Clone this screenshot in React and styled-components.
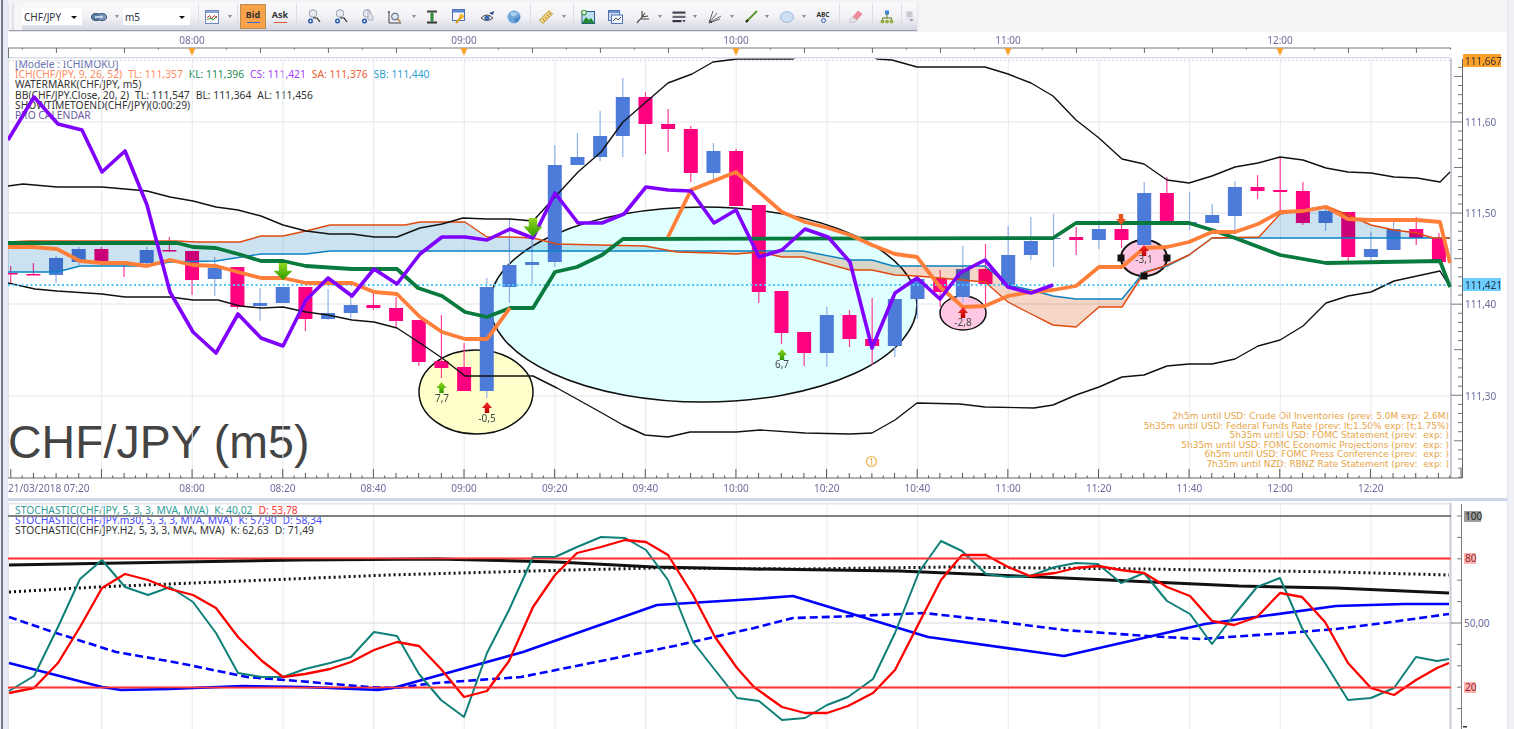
import React from "react";
import styled, { createGlobalStyle } from "styled-components";

const GlobalStyle = createGlobalStyle`
  html, body { margin: 0; padding: 0; background: #fff; overflow: hidden; }
  body { font-family: "Noto Sans", "Liberation Sans", sans-serif; }
`;

// candles: colour, body top, body bottom, wick top, wick bottom
const CANDLES = [
  ["p", 273, 274.5, 266, 283], ["p", 274, 275.5, 263, 275], ["b", 258, 275, 256, 283], ["b", 249, 262, 247, 265],
  ["p", 249, 262, 247, 262], ["p", 262, 263, 262, 277], ["b", 250, 263, 247, 267], ["p", 250, 251.5, 237, 252],
  ["p", 251, 280, 251, 295], ["b", 268, 279, 257, 296], ["p", 267, 307, 267, 309], ["b", 303, 306, 288, 321],
  ["b", 287, 303, 287, 303], ["p", 287, 319, 287, 331], ["b", 313, 319, 289, 320], ["b", 305, 313, 297, 318],
  ["p", 305, 308, 293, 310], ["p", 308, 321, 297, 328], ["p", 320, 362, 320, 366], ["p", 361, 368, 315, 378],
  ["p", 367, 391, 343, 391], ["b", 287, 391, 278, 398], ["b", 265, 287, 218, 303], ["b", 262, 265, 230, 284],
  ["b", 165, 262, 145, 267], ["b", 157, 165, 133, 165], ["b", 136, 157, 111, 161], ["b", 97, 136, 78, 157],
  ["p", 97, 124, 92, 154], ["p", 124, 129, 109, 152], ["p", 129, 173, 126, 182], ["b", 151, 173, 143, 180],
  ["p", 151, 206, 149, 206], ["p", 205, 292, 205, 303], ["p", 291, 333, 291, 344], ["p", 332, 353, 332, 366],
  ["b", 315, 353, 307, 367], ["p", 315, 339, 310, 347], ["p", 339, 346, 298, 365], ["b", 299, 346, 299, 357],
  ["b", 279, 299, 279, 319], ["p", 278, 292, 270, 307], ["b", 269, 297, 246, 302], ["p", 269, 284, 244, 305],
  ["b", 255, 285, 226, 287], ["b", 241, 255, 217, 260], ["b", 238, 239, 214, 267], ["p", 237, 240, 227, 255],
  ["b", 229, 240, 220, 249], ["p", 229, 240, 223, 248], ["b", 193, 245, 182, 245], ["p", 193, 222, 177, 222],
  ["b", 222, 224, 192, 230], ["b", 215, 223, 204, 223], ["b", 187, 216, 181, 230], ["p", 187, 191, 175, 199],
  ["p", 190, 192, 158, 210], ["p", 191, 223, 182, 225], ["b", 211, 223, 208, 231], ["p", 212, 257, 212, 261],
  ["b", 249, 257, 232, 262], ["b", 229, 250, 220, 250], ["p", 229, 238, 217, 245], ["p", 238, 262, 233, 262],
];
const candleX = (i) => 10.7 + i * 22.67;

const CLOUD_TOP = "8,242 28,241 177,241 197,242 240,242 261,236 283,236 306,231 330,225 405,225 420,222 465,222 487,237 510,237 533,238 557,244 600,245 645,246 677,252 713,253 736,254 759,252 782,257 803,257 850,270 872,270 895,275 917,276 985,282 1008,302 1031,314 1053,325 1076,327 1099,307 1122,307 1144,273 1167,265 1189,255 1212,238 1259,237 1280,214 1303,210 1326,206 1348,215 1371,225 1394,230 1417,233 1433,238 1450,238";
const CLOUD_BOTTOM = "8,272 57,272 80,266 147,266 170,262 216,261 261,254 306,254 330,251 803,251 850,260 872,260 893,266 985,266 1008,285 1031,290 1053,296 1076,299 1122,299 1144,272 1167,266 1189,255 1212,238 1450,238";
const CLOUD_POLY = `${CLOUD_TOP} ${CLOUD_BOTTOM.split(" ").reverse().join(" ")}`;

const BB_UP = "8,186 23,184 57,187 102,187 125,189 147,191 170,197 193,201 216,207 238,210 261,216 283,225 306,231 330,234 352,234 374,237 397,237 420,228 442,224 463,218 487,219 510,219 533,221 555,197 578,172 601,152 623,122 646,102 668,83 692,74 713,62 737,59 793,59 805,50 865,50 877,59 892,60 917,67 985,67 1008,74 1031,83 1053,96 1076,120 1099,138 1122,159 1144,164 1167,180 1189,183 1212,176 1235,167 1258,163 1280,157 1303,160 1326,168 1348,172 1371,173 1394,177 1417,178 1440,182 1450,172";
const BB_LOW = "8,283 35,289 57,291 102,294 125,297 170,297 193,300 218,300 240,306 261,308 283,307 306,312 328,315 352,320 374,322 397,328 420,343 442,358 465,376 533,376 557,388 602,413 623,425 645,435 668,437 690,432 736,432 760,430 805,433 850,434 872,433 895,420 917,403 960,404 985,407 1034,408 1053,405 1076,395 1099,387 1122,377 1144,375 1167,366 1189,364 1212,364 1235,359 1258,346 1280,340 1303,326 1326,303 1348,296 1371,292 1394,281 1417,276 1440,271 1450,287";
const KIJUN = "8,243 177,243 193,247 216,248 238,254 261,261 283,261 306,266 352,269 397,269 418,288 442,296 465,312 487,317 510,308 533,308 555,272 577,267 602,255 623,239 1053,238 1076,223 1189,223 1212,230 1235,238 1280,255 1326,263 1440,261 1450,287";
const TENKAN_A = "8,247 33,247 57,249 80,261 102,263 125,263 147,266 170,260 193,265 216,266 238,272 261,278 283,278 306,283 352,283 374,292 397,294 420,317 442,332 465,339 487,339 510,308";
const TENKAN_B = "668,237 691,190 736,172 782,212 805,222 828,228 850,235 872,245 895,254 917,257 940,287 963,307 985,306 1008,296 1031,292 1053,290 1076,286 1099,267 1122,267 1144,248 1167,247 1189,242 1212,232 1235,232 1258,224 1280,212 1303,211 1326,207 1348,219 1371,220 1417,220 1440,222 1450,263";
const CHIKOU = "8,140 34,97 58,124 82,130 102,172 125,151 147,205 170,292 193,332 216,353 238,314 261,338 283,346 306,300 328,278 352,296 374,269 397,284 420,254 442,237 465,237 487,240 510,229 533,238 555,193 578,223 602,223 624,214 646,187 668,190 691,191 714,223 736,210 759,257 782,250 805,229 828,237 850,262 872,348 895,293 917,278 940,299 960,273 985,260 1008,287 1031,293 1053,285";

const STOCH_K = "9,691 34,676 58,627 80,579 102,560 125,587 148,595 170,587 193,602 216,633 238,673 262,677 283,677 305,669 330,663 351,657 374,632 397,636 419,674 441,700 464,717 487,653 509,610 533,557 555,557 577,547 601,537 625,538 646,550 668,580 693,642 715,670 737,698 759,701 782,720 805,718 827,705 848,697 873,679 895,633 919,572 941,541 962,551 986,574 1008,577 1030,576 1055,567 1076,563 1098,564 1121,583 1144,573 1167,601 1190,614 1212,644 1234,615 1257,587 1280,578 1302,628 1325,663 1348,700 1371,698 1394,688 1416,657 1437,661 1449,659";
const STOCH_D = "9,693 34,688 58,663 80,627 102,588 125,574 148,580 170,589 193,595 216,608 238,637 262,661 283,677 305,674 330,669 351,662 374,650 397,642 419,646 441,669 464,697 487,691 509,661 533,607 555,575 577,553 601,547 625,540 646,542 668,555 693,595 715,637 737,668 754,687 782,707 805,713 827,713 848,706 873,693 895,670 919,623 941,580 962,555 986,555 1008,567 1030,576 1055,573 1076,568 1098,566 1121,570 1144,573 1167,587 1190,596 1212,621 1234,625 1257,617 1280,593 1302,597 1325,622 1348,663 1371,688 1394,695 1416,680 1437,668 1449,663";
const M30_K = "9,663 48,673 102,687 121,690 170,689 242,686 305,687 378,690 393,688 523,652 657,605 754,599 793,596 928,637 1064,656 1205,624 1336,606 1404,604 1449,604";
const M30_D = "9,617 53,632 116,652 179,663 247,677 310,682 368,687 393,688 436,683 521,677 606,660 679,645 754,628 793,618 856,616 924,613 987,620 1064,630 1147,636 1200,639 1287,633 1336,629 1384,623 1449,614";
const H2_K = "9,565 121,563 300,560 436,559 557,562 654,567 754,569 899,571 1064,578 1239,586 1336,588 1449,593";
const H2_D = "9,592 97,587 242,581 388,575 533,571 654,568 802,569 948,567 1142,569 1336,572 1449,575";

const TIME_LABELS = ["08:00", "08:20", "08:40", "09:00", "09:20", "09:40", "10:00", "10:20", "10:40", "11:00", "11:20", "11:40", "12:00", "12:20"];
const NEWS = [
  "2h5m until USD: Crude Oil Inventories (prev: 5.0M exp: 2.6M)",
  "5h35m until USD: Federal Funds Rate (prev: lt;1.50% exp: [t;1.75%)",
  "5h35m until USD: FOMC Statement (prev:  exp: )",
  "5h35m until USD: FOMC Economic Projections (prev:  exp: )",
  "6h5m until USD: FOMC Press Conference (prev:  exp: )",
  "7h35m until NZD: RBNZ Rate Statement (prev:  exp: )",
];

const range = (n) => Array.from({ length: n }, (_, i) => i);
const GRID_X = range(15).map((k) => 101.6 + k * 90.67);

const Page = styled.div`
  display: flex;
  width: 1514px;
  height: 729px;
  overflow: hidden;
`;
const LeftStrip = styled.div`
  width: 8px;
  flex: none;
  background: linear-gradient(90deg, #f4f4f8 0 1px, #77778c 1px 3px, #e6e8f4 3px);
`;
const RightStrip = styled.div`
  width: 7px;
  flex: none;
  background: #eef0f6;
  border-left: 1px solid #dfe3ee;
  box-sizing: border-box;
`;
const Main = styled.div`
  width: 1499px;
  display: flex;
  flex-direction: column;
`;
const TopBar = styled.div`
  height: 32px;
  flex: none;
  background: #f4f4f7;
  padding: 3px 0 0 1px;
  box-sizing: border-box;
`;
const Toolbar = styled.div`
  display: flex;
  align-items: center;
  width: 908px;
  height: 27px;
  background: linear-gradient(180deg, #fbfbfd 0%, #f2f2f6 50%, #d6d8e3 100%);
  box-shadow: 0 1px 1px #9a9cae;
`;
const Grip = styled.div`
  width: 13px;
  height: 100%;
  flex: none;
  background: linear-gradient(90deg, #f4f4f7 0 3px, #e2e3ea 3px 5px, #f6f6f9 5px);
`;
const Select = styled.div`
  width: ${(p) => p.$w}px;
  height: 17px;
  flex: none;
  display: flex;
  align-items: center;
  justify-content: space-between;
  background: #fff;
  box-sizing: border-box;
  padding: 0 5px 0 2px;
  font-size: 10px;
  color: #2c3040;
  &::after {
    content: "";
    border-left: 3.5px solid transparent;
    border-right: 3.5px solid transparent;
    border-top: 3.5px solid #111;
    margin-top: 2px;
  }
`;
const Slot = styled.div`
  width: ${(p) => p.$w}px;
  flex: none;
  display: flex;
  justify-content: center;
  align-items: center;
`;
const Caret = styled.div`
  width: ${(p) => p.$w}px;
  flex: none;
  box-sizing: border-box;
  padding-left: ${(p) => p.$pl || 0}px;
  &::before {
    content: "";
    display: block;
    width: 0;
    border-left: 2.5px solid transparent;
    border-right: 2.5px solid transparent;
    border-top: 3px solid #8a8c98;
  }
`;
const Sep = styled.div`
  width: ${(p) => p.$w}px;
  height: 26px;
  flex: none;
  box-sizing: border-box;
  border-right: 1px solid #dcdde6;
`;
const QuoteButton = styled.div`
  width: 26px;
  height: 25px;
  flex: none;
  margin-left: ${(p) => p.$ml || 0}px;
  box-sizing: border-box;
  display: flex;
  flex-direction: column;
  align-items: center;
  justify-content: center;
  font-size: 9px;
  font-weight: 700;
  line-height: 10px;
  color: #333;
  background: ${(p) => (p.$active ? "#f9a24a" : "transparent")};
  border: 1px solid ${(p) => (p.$active ? "#b98c50" : "transparent")};
  &::after {
    content: "";
    width: 13px;
    height: 1.5px;
    margin-top: 2px;
    background: ${(p) => p.$line};
  }
`;

const PricePane = styled.div`
  position: relative;
  height: 466px;
  flex: none;
  background: #fff;
`;
const Splitter = styled.div`
  height: 3px;
  flex: none;
  background: #cbd6e8;
`;
const StochPane = styled.div`
  position: relative;
  height: 228px;
  flex: none;
  background: #fff;
`;
const ChartSvg = styled.svg`
  position: relative;
  z-index: 1;
  display: block;
  font-family: "Noto Sans", "Liberation Sans", sans-serif;
`;
const Legend = styled.div`
  position: absolute;
  left: 7px;
  top: ${(p) => p.$top}px;
  font-size: 10.3px;
  line-height: 10.2px;
  white-space: pre;
  color: #333;
`;
const LegendRow = styled.div`
  height: 10.2px;
  color: ${(p) => p.$color || "inherit"};
`;
const Tone = styled.span`
  color: ${(p) => p.$color};
  margin-left: 6px;
`;
const Watermark = styled.div`
  position: absolute;
  left: 0;
  top: 384px;
  font-family: "Liberation Sans", Arial, sans-serif;
  font-size: 46.5px;
  line-height: 52px;
  color: #444;
  white-space: pre;
`;
const NewsBox = styled.div`
  position: absolute;
  right: 58px;
  top: 380px;
  text-align: right;
  font-family: "DejaVu Sans", sans-serif;
  font-size: 9px;
  line-height: 9.6px;
  color: #e8a445;
  white-space: pre;
`;

const Line = ({ points, color, w = 1.5, dash }) => (
  <polyline points={points} fill="none" stroke={color} strokeWidth={w} strokeDasharray={dash} strokeLinejoin="round" />
);

const Arrow = ({ x, y, w, h, fill, down }) => {
  const head = h * 0.55;
  const stem = w * 0.22;
  const pts = down
    ? [[x - stem, y], [x + stem, y], [x + stem, y + h - head], [x + w / 2, y + h - head], [x, y + h], [x - w / 2, y + h - head], [x - stem, y + h - head], [x - stem, y]]
    : [[x, y], [x + w / 2, y + head], [x + stem, y + head], [x + stem, y + h], [x - stem, y + h], [x - stem, y + head], [x - w / 2, y + head]];
  return <polygon points={pts.map((p) => p.join(",")).join(" ")} fill={fill} />;
};

const AxisText = ({ x, y, children, color = "#6a6c9c", anchor = "middle" }) => (
  <text x={x} y={y} fontSize="10" fill={color} textAnchor={anchor}>{children}</text>
);

const Candles = () =>
  CANDLES.map(([c, top, bottom, wt, wb], i) => {
    const x = candleX(i);
    return (
      <g key={i}>
        <line x1={x} x2={x} y1={wt} y2={wb} stroke={c === "b" ? "#8fb0ea" : "#ff3c98"} strokeWidth="1.2" />
        <rect x={x - 7} y={top} width="14" height={bottom - top} fill={c === "b" ? "#4c7bd9" : "#ff0080"} />
      </g>
    );
  });

function PriceChart() {
  return (
    <ChartSvg width="1499" height="466" viewBox="8 32 1499 466">
      <defs>
        <clipPath id="plot"><rect x="8" y="58.5" width="1442.5" height="420" /></clipPath>
        <clipPath id="blueA"><rect x="8" y="58" width="660" height="420" /></clipPath>
        <clipPath id="brown"><rect x="668" y="58" width="544" height="420" /></clipPath>
        <clipPath id="blueB"><rect x="1212" y="58" width="238" height="420" /></clipPath>
        <linearGradient id="greenFill" x1="0" x2="0" y1="0" y2="1">
          <stop offset="0" stopColor="#8ed81e" />
          <stop offset="1" stopColor="#2f9a00" />
        </linearGradient>
        <linearGradient id="redFill" x1="0" x2="0" y1="0" y2="1">
          <stop offset="0" stopColor="#ff2d2d" />
          <stop offset="1" stopColor="#b80000" />
        </linearGradient>
      </defs>

      {/* grid */}
      {GRID_X.map((x) => <line key={x} x1={x} x2={x} y1="59" y2="477" stroke="#e8e9ee" />)}
      {[122, 213, 304, 396].map((y) => <line key={y} x1="8" x2="1451" y1={y} y2={y} stroke="#ececf0" strokeWidth="1.5" />)}
      <line x1="8" x2="1451" y1="60.5" y2="60.5" stroke="#d8d8de" strokeDasharray="2 2" />
      <line x1="8.5" x2="8.5" y1="48" y2="478" stroke="#dfe1e8" />
      <line x1="1451" x2="1451" y1="58" y2="478" stroke="#c6cad4" strokeWidth="2" />

      {/* top ruler */}
      <rect x="8" y="57" width="1443" height="1.5" fill="#d9deea" />
      <line x1="8" x2="1451" y1="48" y2="48" stroke="#777" strokeWidth="1" />
      <line x1="8.5" x2="8.5" y1="48" y2="58" stroke="#777" />
      {range(43).map((k) => {
        const x = 22.4 + k * 34;
        return <line key={k} x1={x} x2={x} y1="48" y2={k % 2 ? 53 : 49.5} stroke="#666" />;
      })}
      {[192, 464, 736, 1008, 1280].map((x) => (
        <g key={x}>
          <AxisText x={x} y="44">{`${String(8 + (x - 192) / 272).padStart(2, "0")}:00`}</AxisText>
          <polygon points={`${x - 3.5},48 ${x + 3.5},48 ${x},56`} fill="#f8a12e" />
        </g>
      ))}

      {/* bottom ruler */}
      <line x1="8" x2="1462" y1="478" y2="478" stroke="#666" />
      {range(129).map((k) => {
        const x = 10.8 + k * 11.33;
        const h = k % 8 === 0 ? 9 : k % 2 === 0 ? 5 : 2.5;
        return <line key={k} x1={x} x2={x} y1={478 - h} y2="478" stroke="#555" />;
      })}
      <AxisText x="8" y="492" anchor="start">21/03/2018 07:20</AxisText>
      {TIME_LABELS.map((t, k) => <AxisText key={t} x={192 + k * 90.67} y="492">{t}</AxisText>)}

      {/* right scale */}
      <line x1="1462.5" x2="1462.5" y1="59" y2="478" stroke="#666" />
      {range(46).map((k) => {
        const y = 67.3 + k * 9.11;
        const left = (k - 6) % 10 === 0 ? 1451 : (k - 1) % 5 === 0 ? 1454 : 1458;
        return <line key={k} x1={left} x2="1462" y1={y} y2={y} stroke="#777" />;
      })}
      {[["111,60", 122], ["111,50", 213], ["111,40", 304], ["111,30", 396]].map(([t, y]) => (
        <AxisText key={t} x="1465" y={y + 3.5} anchor="start">{t}</AxisText>
      ))}

      {/* drawn ellipses */}
      <ellipse cx="476" cy="392" rx="57" ry="42" fill="#ffffcc" stroke="#111" strokeWidth="1.5" />
      <ellipse cx="703.5" cy="304.5" rx="213.5" ry="97.5" fill="#e0ffff" stroke="#111" strokeWidth="1.5" />
      <ellipse cx="963" cy="313" rx="23" ry="17" fill="#ffc8e2" stroke="#111" strokeWidth="1.5" />
      <ellipse cx="1144" cy="258" rx="23" ry="18" fill="#ffc8e2" stroke="#111" strokeWidth="2" />

      <Candles />

      {/* ichimoku cloud */}
      <g style={{ mixBlendMode: "multiply" }}>
        <polygon points={CLOUD_POLY} fill="#cbe3f0" clipPath="url(#blueA)" />
        <polygon points={CLOUD_POLY} fill="#f6d6c6" clipPath="url(#brown)" />
        <polygon points={CLOUD_POLY} fill="#cbe3f0" clipPath="url(#blueB)" />
      </g>
      <Line points={CLOUD_BOTTOM} color="#0a82c4" w={1.4} />
      <Line points={CLOUD_TOP} color="#e2490e" w={1.4} />

      <g clipPath="url(#plot)">
        <Line points={BB_UP} color="#111" w={1.4} />
        <Line points={BB_LOW} color="#111" w={1.4} />
      </g>
      <line x1="8" x2="1451" y1="285" y2="285" stroke="#4cc6fb" strokeWidth="2" strokeDasharray="2 2.5" />
      <Line points={KIJUN} color="#097a3e" w={3.8} />
      <Line points={TENKAN_A} color="#ff7f3a" w={3.8} />
      <Line points={TENKAN_B} color="#ff7f3a" w={3.8} />
      <Line points={CHIKOU} color="#7f00ff" w={3.6} />

      {/* trade markers */}
      <Arrow x={283} y={263} w={19} h={17} fill="url(#greenFill)" down />
      <Arrow x={533} y={218} w={19} h={19} fill="url(#greenFill)" down />
      <Arrow x={441.5} y={382} w={10} h={11} fill="url(#greenFill)" />
      <Arrow x={782} y={349} w={10} h={11} fill="url(#greenFill)" />
      <Arrow x={487} y={402} w={10} h={11} fill="url(#redFill)" />
      <Arrow x={963} y={307} w={10} h={11} fill="url(#redFill)" />
      <Arrow x={1144} y={245} w={10} h={11} fill="url(#redFill)" />
      <Arrow x={1121} y={214} w={10} h={11} fill="#e8541e" down />
      <AxisText x="442" y="402" color="#444">7,7</AxisText>
      <AxisText x="487" y="422" color="#444">-0,5</AxisText>
      <AxisText x="782" y="368" color="#444">6,7</AxisText>
      <AxisText x="963" y="326" color="#444">-2,8</AxisText>
      <AxisText x="1144" y="263" color="#444">-3,1</AxisText>
      {[[1121, 258], [1167, 258], [1144, 276]].map(([x, y]) => <rect key={x} x={x - 3.5} y={y - 3.5} width="7" height="7" fill="#111" />)}

      {/* calendar marker */}
      <circle cx="871.5" cy="461.5" r="5" fill="#fff" stroke="#f2b24c" strokeWidth="1.2" />
      <text x="871.5" y="464.5" fontSize="8" fill="#e09a2c" textAnchor="middle">1</text>

      {/* price tags */}
      <rect x="1463" y="54" width="38" height="13" fill="#ffa22b" />
      <text x="1465" y="64.5" fontSize="10" fill="#333">111,667</text>
      <rect x="1463" y="278" width="38" height="13" fill="#6dcfff" />
      <text x="1465" y="288.5" fontSize="10" fill="#234">111,421</text>
    </ChartSvg>
  );
}

function StochChart() {
  return (
    <ChartSvg width="1499" height="228" viewBox="8 501 1499 228">
      <rect x="8" y="503" width="1443" height="1.5" fill="#dfe3ec" />
      {GRID_X.map((x) => <line key={x} x1={x} x2={x} y1="504" y2="729" stroke="#e8e9ee" />)}
      <line x1="8" x2="1451" y1="623" y2="623" stroke="#e4e5ea" strokeWidth="1.5" />
      <line x1="8.5" x2="8.5" y1="503" y2="729" stroke="#dfe1e8" />
      <line x1="1450.5" x2="1450.5" y1="503" y2="729" stroke="#c6cad4" strokeWidth="2" />
      <line x1="8" x2="1451" y1="516" y2="516" stroke="#808080" strokeWidth="2" />

      <line x1="1461.5" x2="1461.5" y1="504" y2="729" stroke="#777" />
      {range(11).map((k) => {
        const y = 516 + k * 21.4;
        return <line key={k} x1={k === 5 ? 1451 : 1457} x2="1461" y1={y} y2={y} stroke="#777" />;
      })}
      <rect x="1463" y="726" width="4" height="1.5" fill="#333" />

      {[558.5, 687.5].map((y) => <line key={y} x1="8" x2="1451" y1={y} y2={y} stroke="#ffb0b0" strokeWidth="3" />)}
      <Line points={H2_D} color="#111" w={3} dash="2 3" />
      <Line points={H2_K} color="#111" w={3} />
      <Line points={M30_D} color="#0000ff" w={2.6} dash="8 4" />
      <Line points={M30_K} color="#0000ff" w={2.6} />
      <Line points={STOCH_K} color="#0f8078" w={2} />
      <Line points={STOCH_D} color="#ff0000" w={2.3} />
      {[558.5, 687.5].map((y) => <line key={y} x1="8" x2="1451" y1={y} y2={y} stroke="#ff3535" strokeWidth="1.5" />)}

      <rect x="1464" y="511" width="17" height="11" fill="#9c9c9c" />
      <text x="1465" y="520" fontSize="10" fill="#222">100</text>
      <rect x="1464" y="553" width="12" height="11" fill="#ffb4b4" />
      <text x="1465" y="562" fontSize="10" fill="#8c1e1e">80</text>
      <AxisText x="1464" y="627" anchor="start">50,00</AxisText>
      <rect x="1464" y="682" width="12" height="11" fill="#ffb4b4" />
      <text x="1465" y="691" fontSize="10" fill="#8c1e1e">20</text>
    </ChartSvg>
  );
}

/* toolbar icons */
const Ico = styled.svg`
  display: block;
`;
const IconLink = () => (
  <Ico width="16" height="12" viewBox="0 0 16 12">
    <ellipse cx="5" cy="6" rx="4.5" ry="3.5" fill="#5a7fa8" stroke="#3a4f70" />
    <ellipse cx="11" cy="6" rx="4.5" ry="3.5" fill="#7b97bc" stroke="#3a4f70" />
    <rect x="4" y="5" width="8" height="2" fill="#c4d2e4" />
  </Ico>
);
const IconChart = () => (
  <Ico width="14" height="14" viewBox="0 0 14 14">
    <rect x="0.5" y="0.5" width="13" height="13" fill="#fff" stroke="#6f86c0" />
    <rect x="1" y="1" width="12" height="2" fill="#8ea6dc" />
    <polyline points="2,8 4.5,5.5 6.5,9 9,5.5 12,8" fill="none" stroke="#d8342a" />
    <polyline points="2,10 5,8 8,10 12,6" fill="none" stroke="#2e9a3a" />
  </Ico>
);
const IconZoom = ({ arrow = true }) => (
  <Ico width="14" height="15" viewBox="0 0 14 15">
    <circle cx="6" cy="4.5" r="3.8" fill="#e8eaf2" stroke="#9aa0b0" />
    {arrow && <polyline points="6,9 10,9 13,13" fill="none" stroke="#222" strokeWidth="1.2" />}
    <circle cx="3.5" cy="12" r="2.5" fill="#2458b0" />
    <circle cx="3.5" cy="12" r="1" fill="#fff" />
    {!arrow && <polygon points="7,0 12,8 12,11 7,11" fill="#dfe1e8" stroke="#8c92a4" strokeWidth="0.6" />}
  </Ico>
);
const IconFrameZoom = () => (
  <Ico width="14" height="14" viewBox="0 0 14 14">
    <polyline points="1,1 1,13 13,13" fill="none" stroke="#444" />
    <line x1="0" x2="2" y1="2" y2="2" stroke="#444" />
    <circle cx="7" cy="6.5" r="3.4" fill="#dbe8f6" stroke="#4a5a70" />
    <line x1="9.5" x2="12.5" y1="9" y2="12" stroke="#c07828" strokeWidth="1.4" />
  </Ico>
);
const IconBeam = () => (
  <Ico width="12" height="14" viewBox="0 0 12 14">
    <rect x="1" y="0.5" width="10" height="2" fill="#444" />
    <rect x="1" y="11.5" width="10" height="2" fill="#333" />
    <rect x="4.5" y="2.5" width="3" height="9" fill="#2e8a34" />
  </Ico>
);
const IconWindowKey = () => (
  <Ico width="14" height="15" viewBox="0 0 14 15">
    <rect x="0.5" y="0.5" width="12" height="11" fill="#f6f8fd" stroke="#4f74b8" />
    <rect x="1" y="1" width="11" height="2.5" fill="#5f8ad0" />
    <circle cx="9.5" cy="7.5" r="2.4" fill="#f0b828" />
    <line x1="8.5" x2="4" y1="9" y2="14" stroke="#d89818" strokeWidth="2" />
  </Ico>
);
const IconEye = () => (
  <Ico width="16" height="14" viewBox="0 0 16 14">
    <path d="M1 8 Q7 2 13 8 Q7 13 1 8 Z" fill="#f4f6fa" stroke="#444" />
    <circle cx="7" cy="8" r="2.6" fill="#3e66aa" />
    <path d="M9 3 L14 1 L13 5 Z" fill="#2a4a8a" />
  </Ico>
);
const IconGlobe = () => (
  <Ico width="14" height="14" viewBox="0 0 14 14">
    <circle cx="7" cy="7" r="6.5" fill="#6ea6dc" />
    <path d="M3 3 Q7 1 11 3 Q9 7 6 6 Q4 7 3 3 Z" fill="#a9cdec" />
    <path d="M7 9 Q11 8 13 6 Q13 11 8 13 Z" fill="#4a86c4" />
  </Ico>
);
const IconRuler = () => (
  <Ico width="14" height="14" viewBox="0 0 14 14">
    <polygon points="10,0.5 13.5,4 4,13.5 0.5,10" fill="#f0d27e" stroke="#b89840" />
    <path d="M4 9 L5.5 10.5 M6 7 L7.5 8.5 M8 5 L9.5 6.5 M10 3 L11.5 4.5" stroke="#8c7028" />
  </Ico>
);
const IconPicture = () => (
  <Ico width="14" height="14" viewBox="0 0 14 14">
    <rect x="1" y="1.5" width="12.5" height="12" fill="#bfe0f4" stroke="#2a5e8c" />
    <polygon points="1,13 5,7 8,10 10,8 13.5,13" fill="#1e8a2c" />
    <circle cx="3" cy="2.5" r="2.3" fill="#fff" stroke="#3a9a3a" strokeWidth="1.2" />
  </Ico>
);
const IconSnapshot = () => (
  <Ico width="15" height="14" viewBox="0 0 15 14">
    <rect x="0.5" y="0.5" width="11" height="10" fill="#cfdcf2" stroke="#4f74b8" />
    <rect x="1" y="1" width="10" height="2" fill="#6e94d4" />
    <rect x="3.5" y="5" width="11" height="8.5" fill="#f0f4fb" stroke="#4f74b8" />
    <polyline points="5,11 8,8 10,10 13,7" fill="none" stroke="#555" />
  </Ico>
);
const IconFork = () => (
  <Ico width="14" height="14" viewBox="0 0 14 14">
    <path d="M1 13 L6 7 M6 7 L6 1 M6 7 L12 6 M6 7 L9 3 M4 9 L13 9 M1 13 L3 10" fill="none" stroke="#444" strokeWidth="1.1" />
  </Ico>
);
const IconLines = () => (
  <Ico width="14" height="12" viewBox="0 0 14 12">
    <rect x="0.5" y="0.5" width="13" height="2.2" fill="#445" />
    <rect x="0.5" y="4.8" width="13" height="2.2" fill="#667" />
    <rect x="0.5" y="9" width="9" height="2.2" fill="#334" />
    <polygon points="10.5,9 13.5,9 12,11.5" fill="#334" />
  </Ico>
);
const IconFan = () => (
  <Ico width="14" height="14" viewBox="0 0 14 14">
    <path d="M1 13 L5 1 M1 13 L9 3 M1 13 L13 6 M1 13 L12 9" fill="none" stroke="#666" />
    <line x1="1" x2="4" y1="10" y2="13" stroke="#333" />
  </Ico>
);
const IconPencilLine = () => (
  <Ico width="13" height="13" viewBox="0 0 13 13">
    <line x1="1" x2="12" y1="12" y2="1" stroke="#5f9a30" strokeWidth="2" />
    <line x1="1" x2="3" y1="12" y2="10" stroke="#222" strokeWidth="2" />
  </Ico>
);
const IconEllipse = () => (
  <Ico width="14" height="12" viewBox="0 0 14 12">
    <ellipse cx="7" cy="6" rx="6.5" ry="5.3" fill="#cfe0f4" stroke="#9ab8dc" />
  </Ico>
);
const AbcLabel = styled.div`
  font-size: 6.5px;
  font-weight: 700;
  line-height: 7px;
  color: #333;
  text-align: center;
  &::after {
    content: "";
    display: block;
    width: 5px;
    height: 5px;
    margin: 0 auto;
    border-radius: 50%;
    border: 1.5px solid #2e62b8;
    box-sizing: border-box;
  }
`;
const IconEraser = () => (
  <Ico width="14" height="13" viewBox="0 0 14 13">
    <polygon points="9,0.5 13.5,4 8,10 3.5,7" fill="#ee8a96" />
    <polygon points="3.5,7 8,10 5,12.5 1,12.5 0.5,10" fill="#e4e4e8" stroke="#aeb0b8" strokeWidth="0.6" />
  </Ico>
);
const IconTree = () => (
  <Ico width="14" height="14" viewBox="0 0 14 14">
    <rect x="5" y="0.5" width="4" height="4" fill="#3c82d8" />
    <path d="M7 4 V8 M2.5 10 V8 H11.5 V10" fill="none" stroke="#5a7a20" />
    <circle cx="2.5" cy="11.5" r="2" fill="#93b040" />
    <circle cx="7" cy="11.5" r="2" fill="#93b040" />
    <circle cx="11.5" cy="11.5" r="2" fill="#93b040" />
  </Ico>
);
const IconOverflow = () => (
  <Ico width="8" height="11" viewBox="0 0 8 11">
    <rect x="0.5" y="0.5" width="6" height="6" fill="#c8cad2" />
    <polygon points="3,8 8,8 5.5,10.5" fill="#9a9ca8" />
  </Ico>
);

function ToolbarRow() {
  return (
    <TopBar>
      <Toolbar>
        <Grip />
        <Select $w={60}>CHF/JPY</Select>
        <Slot $w={33}><IconLink /></Slot>
        <Caret $w={8} />
        <Select $w={67}>m5</Select>
        <Sep $w={9} />
        <Slot $w={26}><IconChart /></Slot>
        <Caret $w={11} $pl={3} />
        <Sep $w={2} />
        <QuoteButton $active $line="#2d6cd8" $ml={2}>Bid</QuoteButton>
        <QuoteButton $line="#e2552c" $ml={1}>Ask</QuoteButton>
        <Sep $w={4} />
        <Slot $w={34}><IconZoom /></Slot>
        <Slot $w={20}><IconZoom /></Slot>
        <Slot $w={34}><IconZoom arrow={false} /></Slot>
        <Slot $w={20}><IconFrameZoom /></Slot>
        <Caret $w={14} $pl={7} />
        <Slot $w={26}><IconBeam /></Slot>
        <Slot $w={28}><IconWindowKey /></Slot>
        <Slot $w={30}><IconEye /></Slot>
        <Slot $w={22}><IconGlobe /></Slot>
        <Sep $w={6} />
        <Slot $w={30}><IconRuler /></Slot>
        <Caret $w={11} $pl={1} />
        <Sep $w={2} />
        <Slot $w={28}><IconPicture /></Slot>
        <Slot $w={26}><IconSnapshot /></Slot>
        <Slot $w={30}><IconFork /></Slot>
        <Caret $w={7} />
        <Slot $w={28}><IconLines /></Slot>
        <Caret $w={7} />
        <Slot $w={30}><IconFan /></Slot>
        <Caret $w={7} />
        <Slot $w={28}><IconPencilLine /></Slot>
        <Caret $w={7} />
        <Slot $w={30}><IconEllipse /></Slot>
        <Caret $w={7} />
        <Slot $w={28}><AbcLabel>ABC</AbcLabel></Slot>
        <Sep $w={3} />
        <Slot $w={32}><IconEraser /></Slot>
        <Sep $w={1} />
        <Slot $w={28}><IconTree /></Slot>
        <Sep $w={1} />
        <Slot $w={15}><IconOverflow /></Slot>
      </Toolbar>
    </TopBar>
  );
}

export default function App() {
  return (
    <Page>
      <GlobalStyle />
      <LeftStrip />
      <Main>
        <ToolbarRow />
        <PricePane>
          <Legend $top={27}>
            <LegendRow $color="#6670b0">[Modele : ICHIMOKU]</LegendRow>
            <LegendRow $color="#ff8c62">
              ICH(CHF/JPY, 9, 26, 52)
              <Tone $color="#ff8c62">TL: 111,357</Tone>
              <Tone $color="#1f8c52">KL: 111,396</Tone>
              <Tone $color="#a040ff">CS: 111,421</Tone>
              <Tone $color="#f06030">SA: 111,376</Tone>
              <Tone $color="#30a0d0">SB: 111,440</Tone>
            </LegendRow>
            <LegendRow>WATERMARK(CHF/JPY, m5)</LegendRow>
            <LegendRow>BB(CHF/JPY.Close, 20, 2)<Tone $color="#333">TL: 111,547</Tone><Tone $color="#333">BL: 111,364</Tone><Tone $color="#333">AL: 111,456</Tone></LegendRow>
            <LegendRow>SHOWTIMETOEND(CHF/JPY)(0:00:29)</LegendRow>
            <LegendRow $color="#6a5aa0">PRO CALENDAR</LegendRow>
          </Legend>
          <Watermark>CHF/JPY (m5)</Watermark>
          <NewsBox>
            {NEWS.map((n) => <div key={n}>{n}</div>)}
          </NewsBox>
          <PriceChart />
        </PricePane>
        <Splitter />
        <StochPane>
          <Legend $top={4}>
            <LegendRow $color="#2e9c96">
              STOCHASTIC(CHF/JPY, 5, 3, 3, MVA, MVA)
              <Tone $color="#2e9c96">K: 40,02</Tone>
              <Tone $color="#ff3030">D: 53,78</Tone>
            </LegendRow>
            <LegendRow $color="#4a4aff">
              STOCHASTIC(CHF/JPY.m30, 5, 3, 3, MVA, MVA)
              <Tone $color="#4a4aff">K: 57,90</Tone>
              <Tone $color="#4a4aff">D: 58,34</Tone>
            </LegendRow>
            <LegendRow>
              STOCHASTIC(CHF/JPY.H2, 5, 3, 3, MVA, MVA)
              <Tone $color="#333">K: 62,63</Tone>
              <Tone $color="#333">D: 71,49</Tone>
            </LegendRow>
          </Legend>
          <StochChart />
        </StochPane>
      </Main>
      <RightStrip />
    </Page>
  );
}
